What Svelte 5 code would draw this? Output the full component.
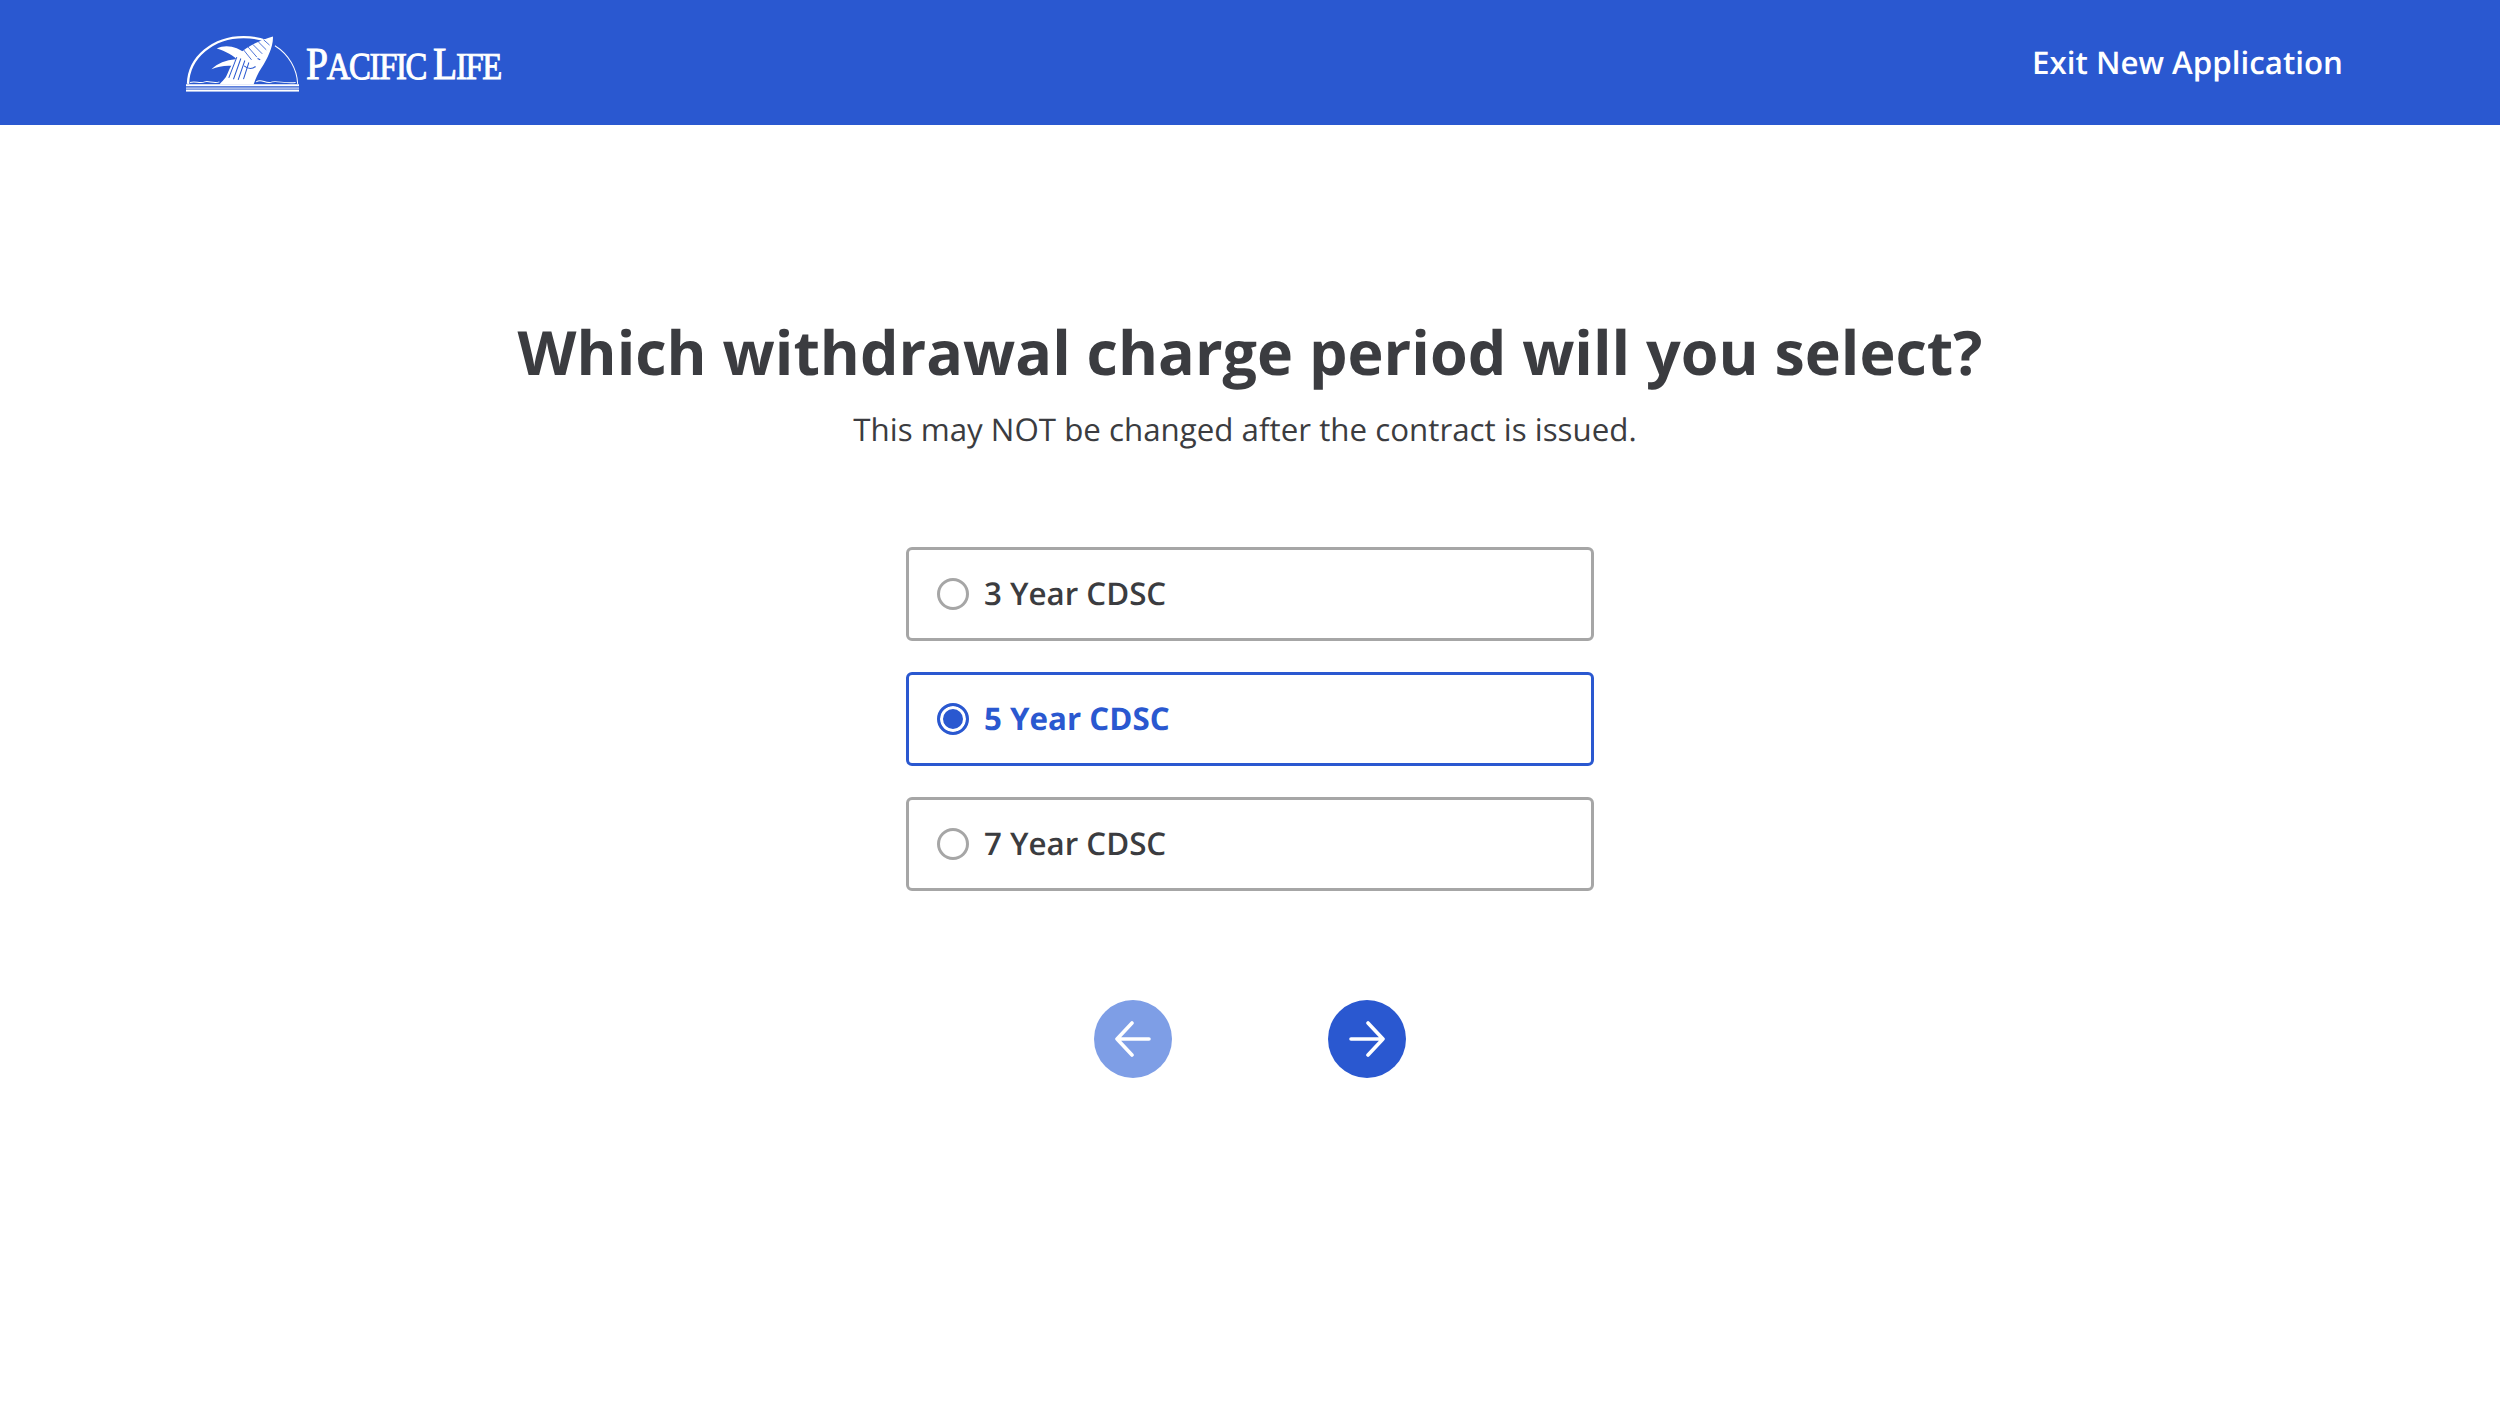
<script>
  const options = [
    { label: '3 Year CDSC', selected: false },
    { label: '5 Year CDSC', selected: true },
    { label: '7 Year CDSC', selected: false }
  ];
</script>

<div class="page">
  <header class="bar">
    <div class="logo">
      <svg class="mark" viewBox="18 18 338 170" width="113" height="57" aria-hidden="true">
        <path d="M24 164 C26 84 100 24 190 24 C215 24 238 28 258 36" fill="none" stroke="#fff" stroke-width="7"/>
        <path d="M284 50 C326 76 350 120 352 164" fill="none" stroke="#fff" stroke-width="3"/>
        <path d="M278 22 C280 50 262 88 244 116 C232 134 226 150 220 166 L118 166 C126 156 136 150 142 134 C150 112 162 94 176 76 C198 54 240 32 278 22Z" fill="#fff"/>
        <path d="M110 58 C140 44 172 54 198 74 L180 100 C160 78 136 66 110 58Z" fill="#fff"/>
        <path d="M94 120 C112 102 138 92 166 90 L156 110 C134 108 114 112 94 120Z" fill="#fff"/>
        <path d="M190 62 L214 92 M204 54 L230 84 M218 46 L246 74 M234 38 L258 62 M250 32 L268 48" fill="none" stroke="#2a58d0" stroke-width="2.5"/>
        <path d="M170 84 L146 146 M182 88 L160 150 M194 94 L174 152 M206 100 L190 150" fill="none" stroke="#2a58d0" stroke-width="3"/>
        <path d="M192 110 C204 120 216 120 226 112 M232 88 L240 92" fill="none" stroke="#2a58d0" stroke-width="3"/>
        <path d="M30 160 C44 154 60 164 74 158 C86 154 100 164 118 158 M228 158 C244 146 256 166 276 158 C292 154 316 164 346 160" fill="none" stroke="#fff" stroke-width="3"/>
        <rect x="18" y="165" width="338" height="6" fill="#fff"/>
        <rect x="18" y="175" width="338" height="3" fill="#fff"/>
        <rect x="18" y="181" width="338" height="6" fill="#fff"/>
      </svg>
      <span class="brand"><span class="cap">P</span>ACIFIC <span class="cap">L</span>IFE</span>
    </div>
    <span class="exit">Exit New Application</span>
  </header>

  <main class="content">
    <h1>Which withdrawal charge period will you select?</h1>
    <p class="sub">This may NOT be changed after the contract is issued.</p>

    <div class="options">
      {#each options as o}
        <div class="option" class:selected={o.selected}>
          <span class="radio"></span>
          <span class="label">{o.label}</span>
        </div>
      {/each}
    </div>

    <div class="nav">
      <button class="round back" aria-label="Back">
        <svg viewBox="0 0 36 36" width="36" height="36"><path d="M34 18 H2 M17 2 L2 18 L17 34" fill="none" stroke="#fff" stroke-width="3.6" stroke-linecap="round" stroke-linejoin="round"/></svg>
      </button>
      <button class="round next" aria-label="Next">
        <svg viewBox="0 0 36 36" width="36" height="36"><path d="M2 18 H34 M19 2 L34 18 L19 34" fill="none" stroke="#fff" stroke-width="3.6" stroke-linecap="round" stroke-linejoin="round"/></svg>
      </button>
    </div>
  </main>
</div>

<style>
  :global(body) {
    margin: 0;
    background: #fff;
  }
  .page {
    font-family: "Open Sans", sans-serif;
    color: #3b3c40;
    text-rendering: geometricPrecision;
  }
  .bar {
    height: 125px;
    background: #2a58d0;
    display: flex;
    align-items: center;
    justify-content: space-between;
    padding: 0 157px 0 186px;
    color: #fff;
  }
  .logo {
    display: flex;
    align-items: center;
    gap: 7px;
    margin-top: 1px;
  }
  .mark {
    display: block;
  }
  .brand {
    font-family: "Liberation Serif", serif;
    font-size: 38px;
    letter-spacing: -1.5px;
    color: #fff;
    -webkit-text-stroke: 1px #fff;
    white-space: nowrap;
    transform: scaleX(0.86);
    transform-origin: left center;
  }
  .cap {
    font-size: 46px;
  }
  .exit {
    font-size: 31.3px;
    font-weight: 600;
  }
  .content {
    display: flex;
    flex-direction: column;
    align-items: center;
  }
  h1 {
    margin: 182px 0 0;
    font-size: 61px;
    line-height: 90px;
    font-weight: 700;
  }
  .sub {
    margin: 11px 10px 0 0;
    font-size: 31.3px;
    line-height: 44px;
  }
  .options {
    margin-top: 95px;
    width: 688px;
    display: flex;
    flex-direction: column;
    gap: 31px;
  }
  .option {
    height: 94px;
    box-sizing: border-box;
    border: 3px solid #a6a6a6;
    border-radius: 6px;
    display: flex;
    align-items: center;
    gap: 15px;
    padding-left: 28px;
    font-size: 31.3px;
    font-weight: 600;
  }
  .radio {
    width: 32px;
    height: 32px;
    box-sizing: border-box;
    border: 3px solid #a6a6a6;
    border-radius: 50%;
    background: #fff;
  }
  .selected {
    border-color: #2a58d0;
    color: #2a58d0;
    font-weight: 700;
  }
  .selected .radio {
    border-color: #2a58d0;
    background: #2a58d0;
    box-shadow: inset 0 0 0 3px #fff;
  }
  .nav {
    margin-top: 109px;
    display: flex;
    gap: 156px;
  }
  .round {
    width: 78px;
    height: 78px;
    padding: 0;
    border: none;
    border-radius: 50%;
    display: flex;
    align-items: center;
    justify-content: center;
  }
  .back {
    background: #7e9ee6;
  }
  .next {
    background: #2a58d0;
  }
</style>
